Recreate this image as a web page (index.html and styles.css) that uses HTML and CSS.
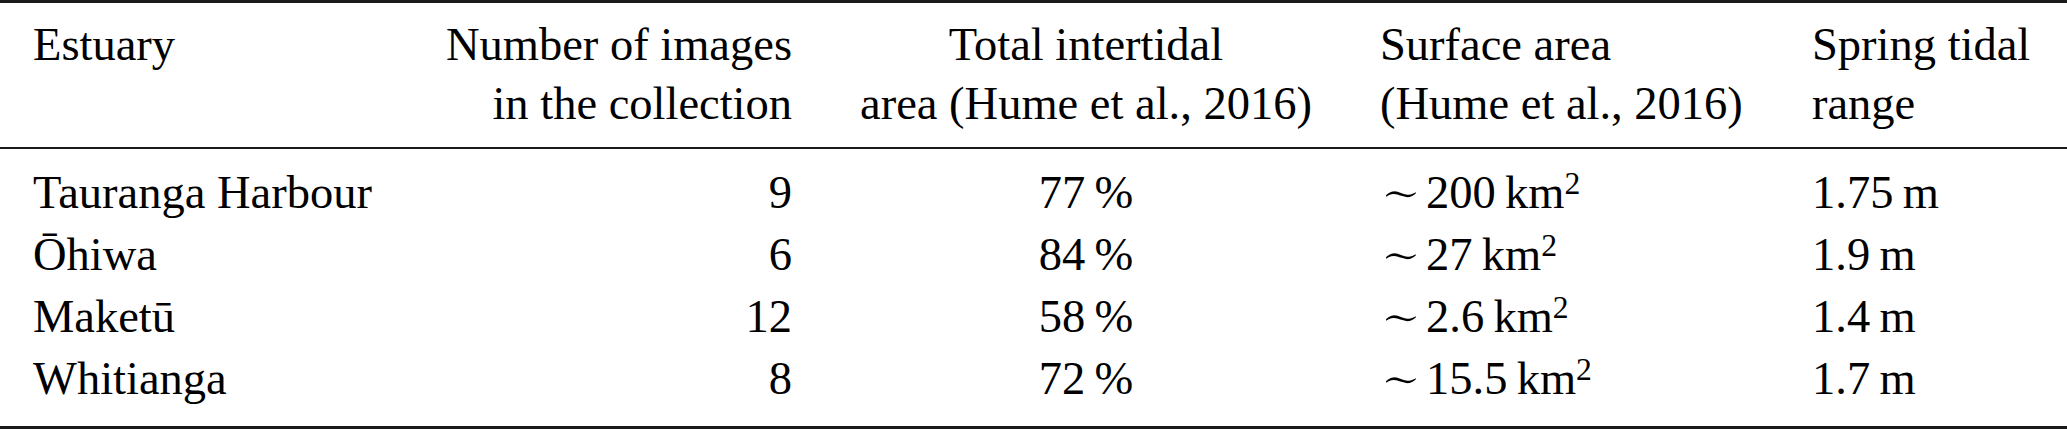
FILE: index.html
```html
<!DOCTYPE html>
<html lang="en">
<head>
    <meta charset="UTF-8">
    <meta name="viewport" content="width=device-width, initial-scale=1.0">
    <title>Estuaries</title>
    <link rel="stylesheet" href="styles.css">
</head>
<body>
  <table class="estuaries">
     <colgroup>
        <col class="c-name">
        <col class="c-count">
        <col class="c-inter">
        <col class="c-surf">
        <col class="c-tide">
     </colgroup>
     <thead>
        <tr>
           <th class="left">Estuary</th>
           <th class="right">Number of images<br>in the collection</th>
           <th class="center">Total intertidal<br>area (Hume et al., 2016)</th>
           <th class="left pad">Surface area<br>(Hume et al., 2016)</th>
           <th class="left pad">Spring tidal<br>range</th>
        </tr>
     </thead>
     <tbody>
        <tr>
           <td class="left">Tauranga Harbour</td>
           <td class="right">9</td>
           <td class="center">77&thinsp;%</td>
           <td class="left pad"><span class="sim">∼</span>200&thinsp;km<sup>2</sup></td>
           <td class="left pad">1.75&thinsp;m</td>
        </tr>
        <tr>
           <td class="left">Ōhiwa</td>
           <td class="right">6</td>
           <td class="center">84&thinsp;%</td>
           <td class="left pad"><span class="sim">∼</span>27&thinsp;km<sup>2</sup></td>
           <td class="left pad">1.9&thinsp;m</td>
        </tr>
        <tr>
           <td class="left">Maketū</td>
           <td class="right">12</td>
           <td class="center">58&thinsp;%</td>
           <td class="left pad"><span class="sim">∼</span>2.6&thinsp;km<sup>2</sup></td>
           <td class="left pad">1.4&thinsp;m</td>
        </tr>
        <tr>
           <td class="left">Whitianga</td>
           <td class="right">8</td>
           <td class="center">72&thinsp;%</td>
           <td class="left pad"><span class="sim">∼</span>15.5&thinsp;km<sup>2</sup></td>
           <td class="left pad">1.7&thinsp;m</td>
        </tr>
     </tbody>
  </table>
</body>
</html>
```

FILE: styles.css
```css
* {
  margin: 0;
  padding: 0;
  box-sizing: border-box;
}

body {
  background-color: #fff;
  color: #000;
  font-family: "Liberation Serif", "Times New Roman", serif;
}

.estuaries {
  width: 2067px;
  table-layout: fixed;
  border-collapse: separate;
  border-spacing: 0;
  font-size: 46.5px;
}

.c-name { width: 420px; }
.c-count { width: 400px; }
.c-inter { width: 532px; }
.c-surf { width: 432px; }
.c-tide { width: 283px; }

.estuaries th,
.estuaries td {
  font-weight: normal;
  white-space: nowrap;
  vertical-align: top;
}

/* header block between top rule and mid rule */
.estuaries th {
  line-height: 59px;
  padding-top: 12px;
  padding-bottom: 14px;
  border-top: 3px solid #1a1a1a;
  border-bottom: 2px solid #1a1a1a;
}

.estuaries td {
  line-height: 62px;
}

.estuaries tbody tr:first-child td {
  padding-top: 13px;
}

.estuaries tbody tr:last-child td {
  padding-bottom: 16px;
  border-bottom: 3px solid #1a1a1a;
}

.left { text-align: left; }
.center { text-align: center; }
.right { text-align: right; }

.estuaries .left:first-child {
  padding-left: 33px;
}

.estuaries .right {
  padding-right: 28px;
}

.estuaries .pad {
  padding-left: 28px;
}

/* math \sim: thinned so it matches the light stroke of the table font */
.sim {
  display: inline-block;
  width: 46px;
  font-family: "DejaVu Serif", serif;
  font-size: 50px;
  line-height: 0;
  vertical-align: -2px;
  -webkit-text-stroke: 1.6px #fff;
}

sup {
  font-size: 0.68em;
  line-height: 0;
  vertical-align: 0.44em;
}
```
